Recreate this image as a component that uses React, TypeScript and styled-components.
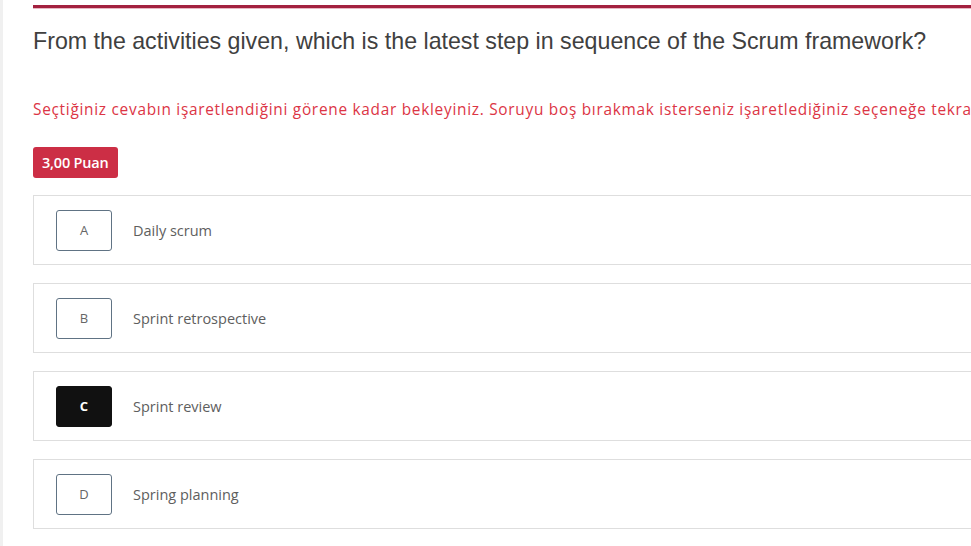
import React from "react";
import styled, { createGlobalStyle } from "styled-components";

const Global = createGlobalStyle`
  html, body { margin: 0; padding: 0; background: #ffffff; }
  body { overflow: hidden; }
`;

const Page = styled.div`
  width: 971px;
  height: 546px;
  box-sizing: border-box;
  border-left: 3px solid #f0f0f0;
  padding-left: 30px;
  overflow: hidden;
  background: #fff;
`;

const Content = styled.div`
  width: 960px;
  padding-top: 5px;
  display: flex;
  flex-direction: column;
`;

const TopRule = styled.div`
  height: 3px;
  background: #a3213f;
  border-bottom: 1px solid #e7b7c2;
`;

const Question = styled.h1`
  margin: 18px 0 0;
  font-family: "Liberation Sans", Arial, sans-serif;
  font-weight: 400;
  font-size: 23.2px;
  line-height: 28px;
  color: #404040;
  white-space: nowrap;
`;

const Notice = styled.p`
  margin: 45px 0 0;
  font-family: "Open Sans", "Lato", sans-serif;
  font-size: 15.4px;
  line-height: 20px;
  letter-spacing: 0.72px;
  color: #dc3545;
  white-space: nowrap;
`;

const Badge = styled.div`
  display: flex;
  align-items: center;
  width: fit-content;
  margin-top: 27px;
  height: 31px;
  padding: 0 9px;
  box-sizing: border-box;
  border-radius: 3px;
  background: #cc2e45;
  color: #fff;
  font-family: "Open Sans", "Lato", sans-serif;
  font-weight: 600;
  font-size: 14.5px;
  letter-spacing: -0.2px;
`;

const Options = styled.div`
  display: flex;
  flex-direction: column;
  gap: 18px;
  margin-top: 17px;
`;

const Option = styled.div`
  display: flex;
  align-items: center;
  gap: 21px;
  height: 68px;
  padding-left: 22px;
  border: 1px solid #dedede;
  border-right: none;
  background: #fff;
`;

const Letter = styled.div<{ $selected?: boolean }>`
  width: 56px;
  height: 41px;
  box-sizing: border-box;
  display: flex;
  align-items: center;
  justify-content: center;
  border-radius: 3px;
  border: 1.5px solid ${(p) => (p.$selected ? "#111" : "#607384")};
  background: ${(p) => (p.$selected ? "#111111" : "#fff")};
  color: ${(p) => (p.$selected ? "#fff" : "#666")};
  font-family: "Open Sans", "Lato", sans-serif;
  font-weight: ${(p) => (p.$selected ? 700 : 400)};
  font-size: 13px;
`;

const Label = styled.span`
  font-family: "Open Sans", "Lato", sans-serif;
  font-size: 14.5px;
  color: #5e5e5e;
`;

const answers = [
  { key: "A", text: "Daily scrum" },
  { key: "B", text: "Sprint retrospective" },
  { key: "C", text: "Sprint review", selected: true },
  { key: "D", text: "Spring planning" },
];

export default function App() {
  return (
    <Page>
      <Global />
      <Content>
        <TopRule />
        <Question>
          From the activities given, which is the latest step in sequence of the Scrum framework?
        </Question>
        <Notice>
          Seçtiğiniz cevabın işaretlendiğini görene kadar bekleyiniz. Soruyu boş bırakmak isterseniz işaretlediğiniz seçeneğe tekrar tıklayınız.
        </Notice>
        <Badge>3,00 Puan</Badge>
        <Options>
          {answers.map((a) => (
            <Option key={a.key}>
              <Letter $selected={a.selected}>{a.key}</Letter>
              <Label>{a.text}</Label>
            </Option>
          ))}
        </Options>
      </Content>
    </Page>
  );
}
